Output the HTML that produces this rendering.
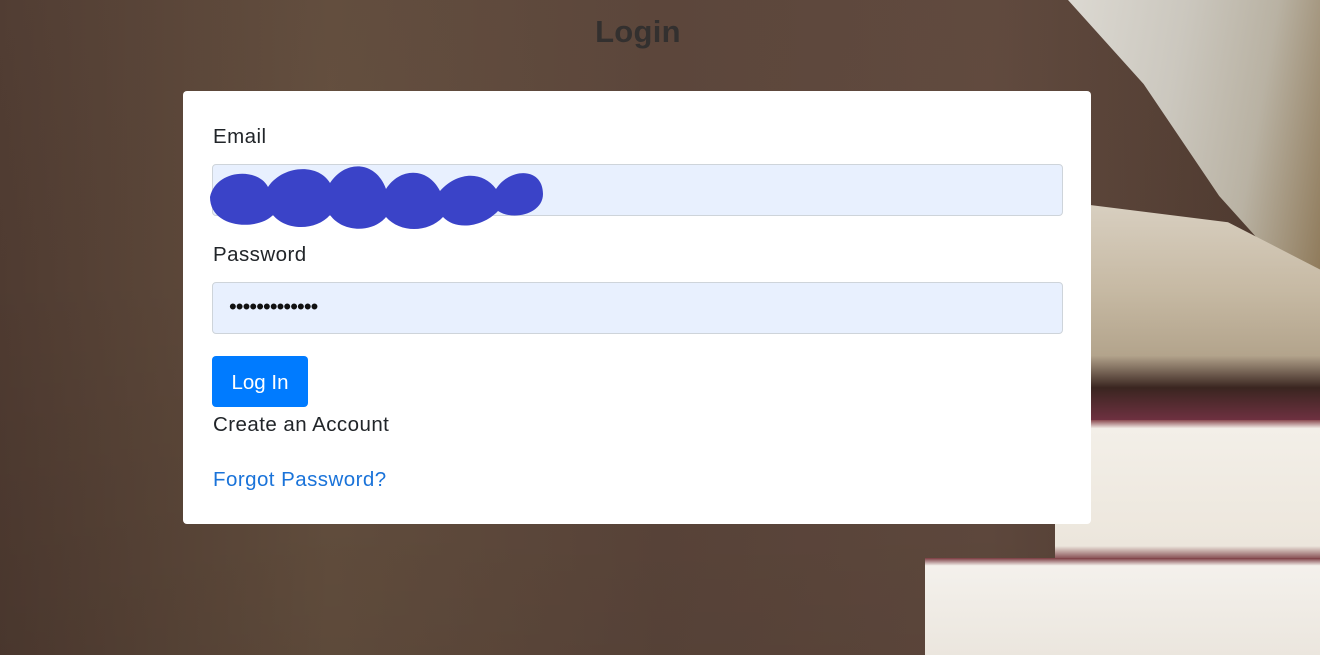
<!DOCTYPE html>
<html><head><style>
html,body{margin:0;padding:0;width:1320px;height:655px;overflow:hidden;font-family:"Liberation Sans",sans-serif;}
body{position:relative;background:linear-gradient(90deg,#4f3b31 0%,#65503f 25%,#5c463b 50%,#624b3f 75%,#4a362c 100%);}
.wood{position:absolute;inset:0;background:linear-gradient(180deg,rgba(90,70,60,0.2) 0%,rgba(0,0,0,0) 40%,rgba(0,0,0,0.08) 100%);}
.b{position:absolute;}
h1{position:absolute;top:14px;left:0;width:1276px;text-align:center;margin:0;font-size:31px;font-weight:bold;color:#33302f;letter-spacing:0.3px;}
.card{position:absolute;left:183px;top:91px;width:908px;height:433px;background:#fff;border-radius:4px;}
label{position:absolute;left:30px;font-size:20.5px;color:#212529;letter-spacing:0.45px;}
.in{position:absolute;left:29px;width:849px;height:50px;background:#e8f0fe;border:1px solid #ced4da;border-radius:4px;}
.btn{position:absolute;left:29px;top:265px;width:96px;height:51px;background:#007bff;border-radius:4px;color:#fff;font-size:20.5px;line-height:53px;text-align:center;}
</style></head><body>
<div class="wood"></div>
<div class="b" style="left:1068px;top:0;width:252px;height:280px;background:linear-gradient(100deg,#dcd9d2 0%,#cbc7be 40%,#b9b2a3 70%,#8f7a5a 100%);clip-path:polygon(0 0,100% 0,100% 100%,85% 95%,60% 70%,30% 30%)"></div>
<div class="b" style="left:1090px;top:205px;width:230px;height:215px;background:linear-gradient(180deg,#d8cfc0 0%,#c6b9a3 40%,#b3a48c 70%,#3a2520 85%,#6e3140 100%);clip-path:polygon(0 0,60% 8%,100% 30%,100% 100%,0 100%)"></div>
<div class="b" style="left:1055px;top:420px;width:265px;height:140px;background:linear-gradient(180deg,#8a4a50 0%,#f3efe8 6%,#ece6dc 90%,#7c3e44 100%);"></div>
<div class="b" style="left:925px;top:558px;width:395px;height:97px;background:linear-gradient(180deg,#7a3a40 0%,#f4f1ec 8%,#ebe6de 100%);"></div>
<h1>Login</h1>
<div class="card">
<label style="top:34px">Email</label>
<div class="in" style="top:73px"></div>
<svg class="b" style="left:25px;top:68px" width="340" height="72"><path d="M2 38 C8 10,50 8,60 28 C75 6,110 4,122 24 C138 0,168 2,178 30 C192 8,220 8,232 32 C250 12,275 12,288 30 C302 8,335 8,335 35 C335 55,305 62,290 52 C275 68,248 72,235 58 C220 74,192 74,178 58 C165 74,135 74,122 56 C108 72,78 72,65 56 C50 72,2 70,2 38Z" fill="#3a43c8"/></svg>
<label style="top:152px">Password</label>
<div class="in" style="top:191px"></div>
<div class="b" style="left:46px;top:203px;font-size:22px;letter-spacing:-0.9px;color:#111">•••••••••••••</div>
<div class="btn">Log In</div>
<label style="top:322px">Create an Account</label>
<label style="top:377px;color:#1a73d9">Forgot Password?</label>
</div>
</body></html>
